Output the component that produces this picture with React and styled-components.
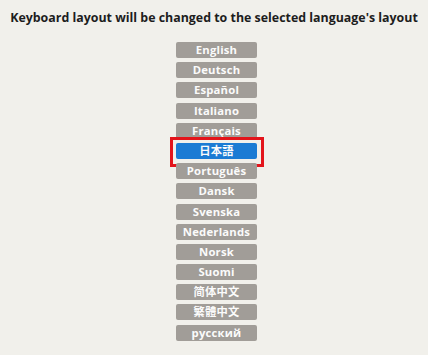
import React from "react";
import styled, { createGlobalStyle } from "styled-components";

const Global = createGlobalStyle`
  html, body { margin: 0; padding: 0; background: #f1f0eb; }
  body { font-family: "Open Sans", "Noto Sans", "Noto Sans CJK JP", sans-serif; }
`;

const Page = styled.div`
  width: 428px;
  height: 355px;
  box-sizing: border-box;
  padding-top: 9px;
  background: #f1f0eb;
  display: flex;
  flex-direction: column;
  align-items: center;
`;

const Title = styled.h1`
  margin: 0;
  font-size: 12.4px;
  font-weight: 700;
  color: #1d1d1d;
  white-space: nowrap;
  line-height: 18px;
`;

const List = styled.div`
  margin-top: 15px;
  margin-left: 5px;
  display: flex;
  flex-direction: column;
  gap: 4.2px;
`;

const LangButton = styled.div`
  position: relative;
  width: 81px;
  height: 16px;
  border-radius: 2px;
  background: ${(p) => (p.$selected ? "#1b7bd4" : "#a19d98")};
  color: #fbfbfb;
  font-family: "Open Sans", "Noto Sans CJK JP", "Noto Sans CJK SC", sans-serif;
  font-size: 11.3px;
  font-weight: 700;
  line-height: 16px;
  text-align: center;
  letter-spacing: 0.2px;

  &::after {
    content: "";
    display: ${(p) => (p.$selected ? "block" : "none")};
    position: absolute;
    top: -6px;
    right: -7px;
    bottom: -8px;
    left: -6px;
    border: 3px solid #e3141b;
  }
`;

const langs = [
  "English",
  "Deutsch",
  "Español",
  "Italiano",
  "Français",
  "日本語",
  "Português",
  "Dansk",
  "Svenska",
  "Nederlands",
  "Norsk",
  "Suomi",
  "简体中文",
  "繁體中文",
  "русский",
];

export default function App() {
  return (
    <>
      <Global />
      <Page>
        <Title>Keyboard layout will be changed to the selected language's layout</Title>
        <List>
          {langs.map((l) => (
            <LangButton key={l} $selected={l === "日本語"}>
              {l}
            </LangButton>
          ))}
        </List>
      </Page>
    </>
  );
}
